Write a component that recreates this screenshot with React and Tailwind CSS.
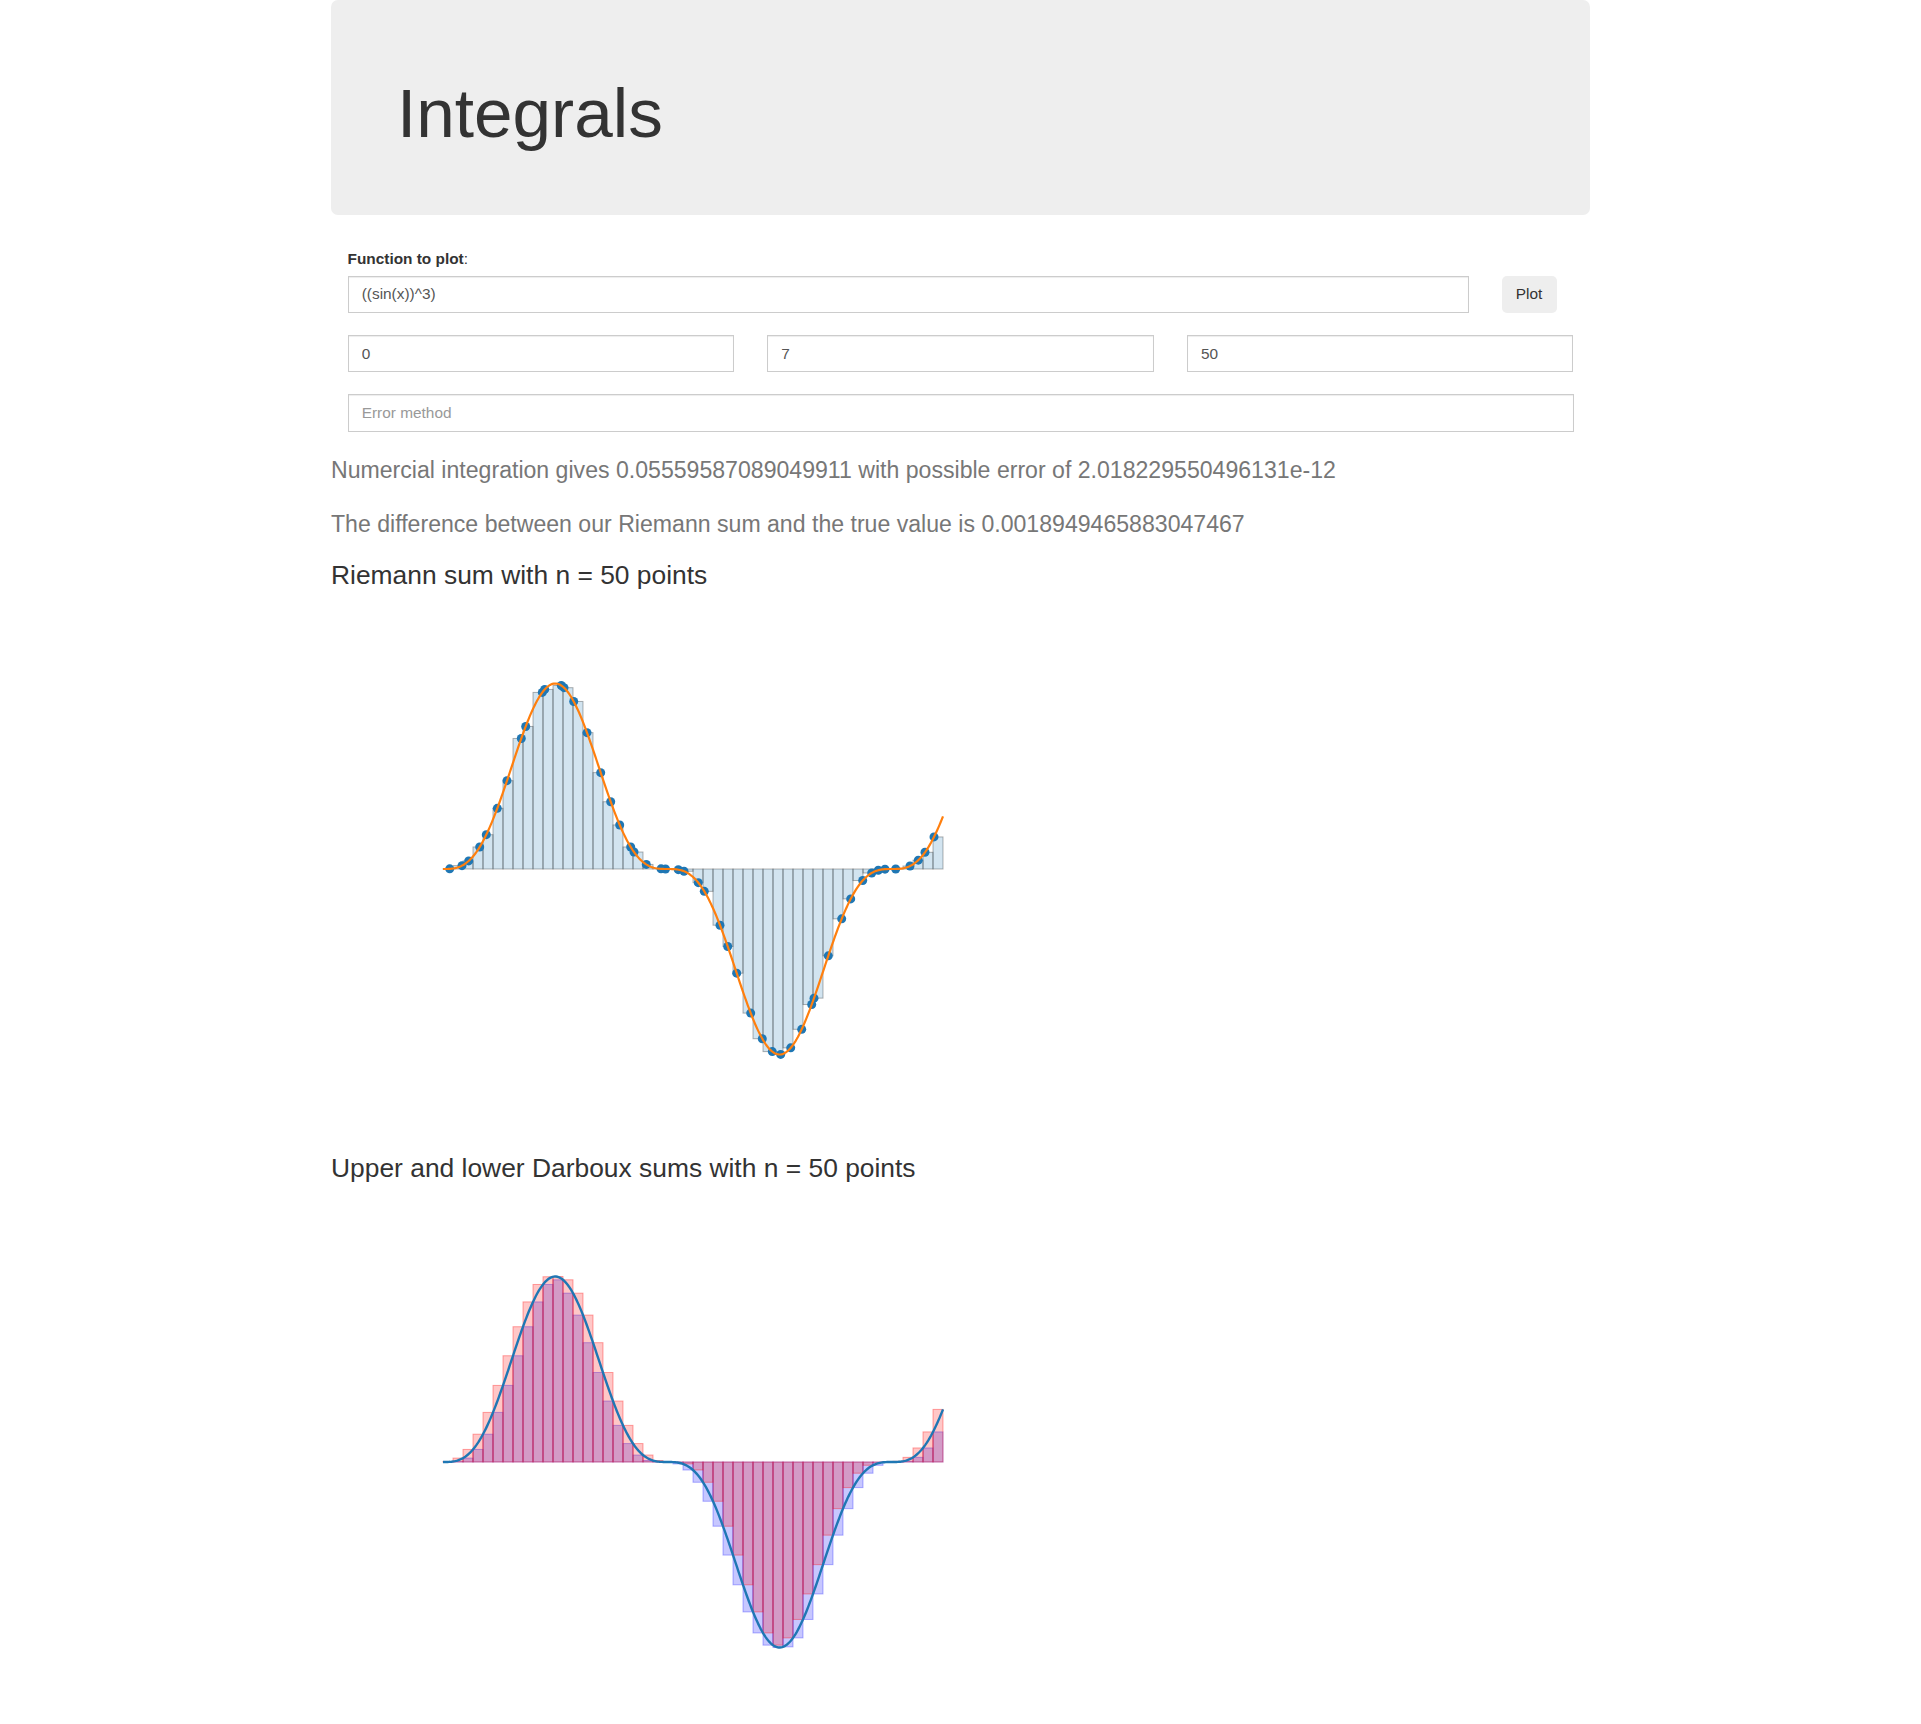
import React from 'react'

// f(x) = sin(x)^3 on [0, 7], 50 subintervals
const f = (x) => Math.pow(Math.sin(x), 3)
const N = 50
const A = 0
const B = 7
const DX = (B - A) / N
const W = 500
const BASE = 269
const AMP = 185.5
const X = (x) => ((x - A) * W) / (B - A)
const Y = (v) => BASE - v * AMP

// where the random sample landed in each subinterval (fraction of the width)
const fracs = [
  0.67, 0.9, 0.57, 0.67, 0.33, 0.43, 0.4, 0.83, 0.27, 0.93,
  0.17, 0.83, 0.1, 0.07, 0.4, 0.77, 0.77, 0.67, 0.77, 0.1,
  0.33, 0.8, 0.25, 0.53, 0.1, 0.53, 0.13, 0.7, 0.47, 0.37,
  0.77, 0.93, 0.93, 0.77, 0.77, 0.87, 0.87, 0.1, 0.53, 0.87,
  0.77, 0.97, 0.87, 0.53, 0.2, 0.27, 0.7, 0.53, 0.2, 0.1,
]

const curve = (() => {
  const pts = []
  for (let i = 0; i <= 420; i++) {
    const x = A + ((B - A) * i) / 420
    pts.push(`${X(x).toFixed(2)},${Y(f(x)).toFixed(2)}`)
  }
  return 'M' + pts.join('L')
})()

const riemann = fracs.map((u, k) => {
  const s = A + (k + u) * DX
  return { k, s, v: f(s) }
})

const darboux = Array.from({ length: N }, (_, k) => {
  const a = A + k * DX
  let lo = Infinity
  let hi = -Infinity
  for (let j = 0; j <= 60; j++) {
    const v = f(a + (DX * j) / 60)
    if (v < lo) lo = v
    if (v > hi) hi = v
  }
  return { k, lo, hi }
})

function Bar({ k, v, ...rest }) {
  const y = Math.min(Y(v), BASE)
  const h = Math.abs(v) * AMP
  return <rect x={k * (W / N)} y={y} width={W / N} height={h} {...rest} />
}

function RiemannChart() {
  return (
    <svg width="520" height="520" viewBox="-10 0 520 520" className="block ml-[102px]">
      {riemann.map((r) => (
        <Bar key={r.k} k={r.k} v={r.v} fill="#1f77b4" fillOpacity="0.2" stroke="#000" strokeOpacity="0.3" strokeWidth="1" />
      ))}
      {riemann.map((r) => (
        <circle key={r.k} cx={X(r.s)} cy={Y(r.v)} r="4.5" fill="#1f77b4" />
      ))}
      <path d={curve} fill="none" stroke="#ff7f0e" strokeWidth="2.2" />
    </svg>
  )
}

function DarbouxChart() {
  return (
    <svg width="520" height="520" viewBox="-10 0 520 520" className="block ml-[102px]">
      {darboux.map((d) => (
        <Bar key={'l' + d.k} k={d.k} v={d.lo} fill="#0000ff" fillOpacity="0.22" stroke="#0000ff" strokeOpacity="0.3" strokeWidth="1" />
      ))}
      {darboux.map((d) => (
        <Bar key={'u' + d.k} k={d.k} v={d.hi} fill="#ff0000" fillOpacity="0.22" stroke="#ff0000" strokeOpacity="0.35" strokeWidth="1" />
      ))}
      <path d={curve} fill="none" stroke="#1f77b4" strokeWidth="2.4" />
    </svg>
  )
}

const inputCls =
  'block h-[37.4px] px-[13.2px] border border-[#ccc] bg-white text-[15.4px] text-[#555] shadow-[inset_0_1px_1px_rgba(0,0,0,0.075)] outline-none placeholder:text-[#999]'

export default function App() {
  return (
    <div className="min-h-[1724px] bg-white font-['Liberation_Sans',Arial,sans-serif] text-[#333]">
      <div className="w-[1259px] mx-auto">
        {/* header */}
        <div className="h-[215px] bg-[#eee] rounded-[7px] px-[66px] pt-[75px]">
          <h1 className="text-[69.3px] leading-[1.1] font-normal">Integrals</h1>
        </div>

        {/* form */}
        <div className="mt-[33px] px-[16.5px]">
          <div className="text-[15.4px] leading-[22px] mb-[5.5px] text-[#333]">
            <span className="font-bold">Function to plot</span>:
          </div>
          <div className="flex items-start gap-[33px]">
            <input className={`${inputCls} w-[1121px] flex-none`} defaultValue="((sin(x))^3)" />
            <button className="flex-none h-[37px] w-[55px] rounded-[5px] bg-[#eee] text-[15.4px] text-[#333]">Plot</button>
          </div>
          <div className="mt-[22px] grid grid-cols-3 gap-[33px]">
            <input className={`${inputCls} w-full`} defaultValue="0" />
            <input className={`${inputCls} w-full`} defaultValue="7" />
            <input className={`${inputCls} w-full`} defaultValue="50" />
          </div>
          <div className="mt-[22px]">
            <input className={`${inputCls} w-full`} placeholder="Error method" />
          </div>
        </div>

        <p className="mt-[22px] text-[23.1px] leading-[1.4] text-[#777]">
          Numercial integration gives 0.05559587089049911 with possible error of 2.018229550496131e-12
        </p>
        <p className="mt-[22px] text-[23.1px] leading-[1.4] text-[#777]">
          The difference between our Riemann sum and the true value is 0.0018949465883047467
        </p>

        <h3 className="mt-[21px] text-[26.4px] leading-[1.1] font-normal">Riemann sum with n = 50 points</h3>
        <div className="mt-[10px]">
          <RiemannChart />
        </div>

        <h3 className="mt-[34px] text-[26.4px] leading-[1.1] font-normal">Upper and lower Darboux sums with n = 50 points</h3>
        <div className="mt-[10px]">
          <DarbouxChart />
        </div>
      </div>
    </div>
  )
}
